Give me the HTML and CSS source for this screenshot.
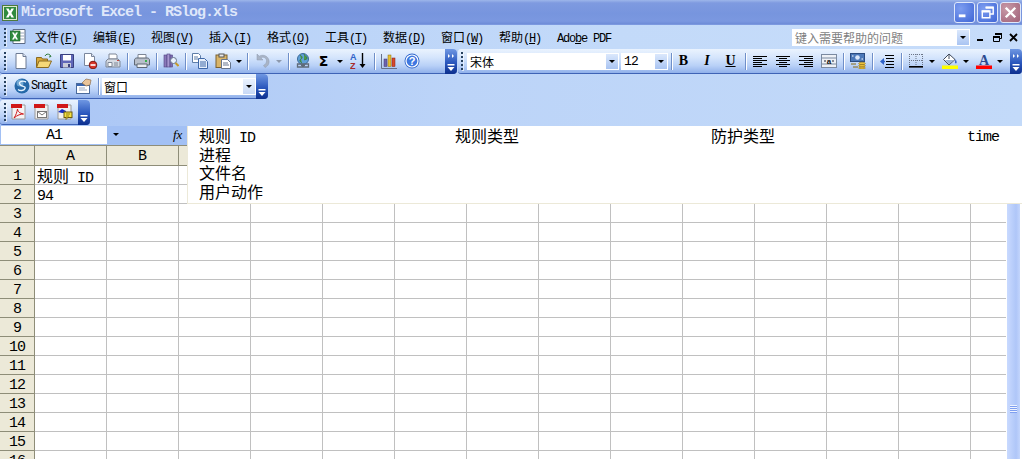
FILE: index.html
```html
<!DOCTYPE html>
<html lang="zh">
<head>
<meta charset="utf-8">
<title>Microsoft Excel - RSlog.xls</title>
<link rel="stylesheet" href="styles.css">
</head>
<body>
<header class="titlebar">
  <svg class="app-icon" viewBox="0 0 16 16"><rect x=".5" y=".5" width="15" height="15" fill="#dfe8d0" stroke="#4d7a3c"/><rect x="2" y="2" width="12" height="12" fill="#2f8a3e"/><path d="M4 3.500h2.600L8 6l1.400-2.500H12L9.400 8 12 12.500H9.400L8 10l-1.400 2.500H4L6.600 8z" fill="#fff"/></svg>
  <span class="title-text">Microsoft Excel - RSlog.xls</span>
  <div class="win-buttons">
    <div class="win-btn"><svg viewBox="0 0 20 20"><rect x="4" y="12" width="7" height="3" fill="#fff"/></svg></div>
    <div class="win-btn"><svg viewBox="0 0 20 20"><path d="M8 4.500h8v7h-3M4.500 8.500h8v7h-8z" fill="none" stroke="#fff" stroke-width="1.500"/><path d="M8 4h8v2H8zM4 8h8v2H4z" fill="#fff"/></svg></div>
    <div class="win-btn win-close"><svg viewBox="0 0 20 20"><path d="M5 5l10 10M15 5L5 15" stroke="#fff" stroke-width="2.600"/></svg></div>
  </div>
</header>

<nav class="menubar">
  <span class="grip"></span>
  <svg class="doc-icon" viewBox="0 0 16 16"><path d="M3 .5h12v14H3z" fill="#fff" stroke="#5b6a84"/><path d="M9 4h5M9 7h5M9 10h5" stroke="#9aa7bd"/><rect x="0" y="2" width="10" height="10" fill="#2f8a3e" stroke="#1f5e2a" stroke-width=".6"/><path d="M2 3.500h2l1 2 1-2h2l-2 3.500 2 3.500H6l-1-2-1 2H2l2-3.500z" fill="#fff"/></svg>
  <span class="menu-items">
    <span class="menu-item">文件<small>(<u>F</u>)</small></span>
    <span class="menu-item">编辑<small>(<u>E</u>)</small></span>
    <span class="menu-item">视图<small>(<u>V</u>)</small></span>
    <span class="menu-item">插入<small>(<u>I</u>)</small></span>
    <span class="menu-item">格式<small>(<u>O</u>)</small></span>
    <span class="menu-item">工具<small>(<u>T</u>)</small></span>
    <span class="menu-item">数据<small>(<u>D</u>)</small></span>
    <span class="menu-item">窗口<small>(<u>W</u>)</small></span>
    <span class="menu-item">帮助<small>(<u>H</u>)</small></span>
    <span class="menu-item"><small>Ado<u>b</u>e PDF</small></span>
  </span>
  <span class="help-box"><span class="help-text">键入需要帮助的问题</span><span class="dd-button"><i class="arrow"></i></span></span>
  <span class="doc-controls">
    <svg viewBox="0 0 11 11"><rect x="1" y="7" width="6" height="2" fill="#000"/></svg>
    <svg viewBox="0 0 11 11"><path d="M3.500 1.500h6v5h-2M1.500 4.500h6v5h-6z" fill="none" stroke="#000"/><path d="M3 1h7v2H3zM1 4h7v2H1z"/></svg>
    <svg viewBox="0 0 11 11"><path d="M2 2l7 7M9 2l-7 7" stroke="#000" stroke-width="1.800"/></svg>
  </span>
</nav>

<div class="dock">
  <div class="dock-row row-main">
    <div class="toolbar tb-standard">
      <span class="grip"></span>
      <span class="btn"><svg viewBox="0 0 16 16"><path d="M3 .5h7l3 3v12H3z" fill="#fff" stroke="#6d7b94"/><path d="M10 .5v3h3" fill="#dfe6f2" stroke="#6d7b94"/></svg></span>
      <span class="btn"><svg viewBox="0 0 16 16"><path d="M.5 4.500h5l1 1.500h5v8H.5z" fill="#d9a93a" stroke="#8a6a20"/><path d="M3 8h12.500l-3 6.500H.5z" fill="#f6d878" stroke="#8a6a20"/><path d="M9 3c1-2 3-2.500 5-1l1 1.500-2 .5" fill="none" stroke="#2f7a3a"/></svg></span>
      <span class="btn"><svg viewBox="0 0 16 16"><path d="M1.500 1.500h13v13h-13z" fill="#5f66b8" stroke="#39407f"/><rect x="4" y="2" width="8" height="5.500" fill="#fff"/><rect x="4" y="10" width="8" height="4.500" fill="#c8cbd8"/><rect x="9" y="11" width="2" height="3" fill="#39407f"/></svg></span>
      <span class="btn"><svg viewBox="0 0 16 16"><path d="M2.500.5h7l3 3v9h-10z" fill="#fff" stroke="#7a869c"/><path d="M9.500.5v3h3" fill="#dfe6f2" stroke="#7a869c"/><circle cx="11" cy="12" r="3.800" fill="#d8342a" stroke="#7e1a14"/><rect x="8.500" y="11.200" width="5" height="1.600" fill="#fff"/></svg></span>
      <span class="btn"><svg viewBox="0 0 16 16"><path d="M4 1h7l1 1.500V6H4z" fill="#fff" stroke="#7e8796"/><path d="M1 8l2-2h10l2 2v6H1z" fill="#d6dbe3" stroke="#7e8796"/><path d="M3 9.500h4v4H3z" fill="#fff" stroke="#7e8796"/><path d="M9 10h4M9 12h4" stroke="#7e8796"/><rect x="12" y="7" width="2" height="1" fill="#c9443a"/></svg></span>
      <i class="sep"></i>
      <span class="btn"><svg viewBox="0 0 16 16"><path d="M4 1.500h8V6H4z" fill="#fff" stroke="#7e8796"/><path d="M.5 7c0-1 1-2 2-2h11c1 0 2 1 2 2v5h-15z" fill="#b8bfca" stroke="#5f6875"/><path d="M3 11h10v3.500H3z" fill="#eceff3" stroke="#5f6875"/><rect x="11" y="7" width="2" height="2" fill="#38b04a"/></svg></span>
      <i class="sep"></i>
      <span class="btn"><svg viewBox="0 0 16 16"><rect x="1" y="2" width="3" height="12" fill="#8a78b8" stroke="#4e4280" stroke-width=".6"/><rect x="4" y="1" width="3" height="13" fill="#a898d0" stroke="#4e4280" stroke-width=".6"/><rect x="7" y="2" width="2.500" height="12" fill="#7d6bb0" stroke="#4e4280" stroke-width=".6"/><circle cx="10.500" cy="7.500" r="3" fill="#eaf3ff" stroke="#68758c"/><path d="M12.500 10l3 3" stroke="#c79a2a" stroke-width="2"/></svg></span>
      <i class="sep"></i>
      <span class="btn"><svg viewBox="0 0 16 16"><path d="M.5.5h6l2 2v7h-8z" fill="#fff" stroke="#5f7ea8"/><path d="M2 4h4M2 6h4" stroke="#5f7ea8"/><path d="M6.500 5.500h6l3 3v7h-9z" fill="#e7f0fc" stroke="#3f68a8"/><path d="M8 9h6M8 11h6M8 13h6" stroke="#3f68a8"/></svg></span>
      <span class="btn"><svg viewBox="0 0 16 16"><rect x="1" y="2" width="11" height="12.500" fill="#d9b468" stroke="#7a6030"/><rect x="4" y="1" width="5" height="3" fill="#e8e8e8" stroke="#555"/><path d="M6.500 6.500h6l3 3v6h-9z" fill="#fff" stroke="#66758c"/><path d="M8 10h5M8 12h6" stroke="#66758c"/></svg></span>
      <span class="dd"><i class="arrow"></i></span>
      <i class="sep"></i>
      <span class="btn"><svg viewBox="0 0 16 16"><path d="M3 1v6h6L6.800 4.800C9 3.500 12 4.500 12.500 7.500c.3 2-1 4-3 5l1.500 2c3.500-1.500 5-5 3.500-8.500C13 2.500 8.500 1.200 5.200 3.200z" fill="#a9b4c6" stroke="#8d99ad" stroke-width=".5"/></svg></span>
      <span class="dd dd-wide"><i class="arrow arrow-off"></i></span>
      <i class="sep"></i>
      <span class="btn"><svg viewBox="0 0 16 16"><circle cx="8" cy="6" r="5.500" fill="#5fa0d8" stroke="#3a6a9a"/><path d="M5 2c2 1 3 3 1 4s-1 3 1 4M9 1c0 2 3 2 3 4s-2 1-3 2" fill="#4a9a4a" stroke="#3c8040"/><path d="M2.500 11h5v3h-5zM8.500 11h5v3h-5z" fill="none" stroke="#5f6b78" stroke-width="1.300"/><path d="M6 12.500h4" stroke="#5f6b78" stroke-width="1.300"/></svg></span>
      <span class="btn btn-narrow"><span class="sigma">Σ</span></span>
      <span class="dd dd-mid"><i class="arrow"></i></span>
      <span class="btn"><svg viewBox="0 0 16 16"><text x="0" y="7" class="sort-a">A</text><text x="0" y="15.500" class="sort-z">Z</text><path d="M12.500 0v13" stroke="#000" stroke-width="1.400"/><path d="M9.500 11h6l-3 4z"/></svg></span>
      <i class="sep sep-loose"></i>
      <span class="btn"><svg viewBox="0 0 16 16"><path d="M.5 1v14.500H16" fill="none" stroke="#66708a"/><path d="M1 13.500l3-2h11l-3 2z" fill="#c8ccd8"/><rect x="3" y="6" width="3" height="7.500" fill="#6e64b0" stroke="#3e3670" stroke-width=".5"/><rect x="7" y="2" width="3" height="11.500" fill="#e8c030" stroke="#8a6e10" stroke-width=".5"/><rect x="11" y="5" width="3" height="8.500" fill="#d8482e" stroke="#802010" stroke-width=".5"/></svg></span>
      <span class="btn"><svg viewBox="0 0 16 16"><circle cx="8" cy="8" r="7.500" fill="#2f66cc"/><circle cx="8" cy="8" r="6" fill="#3f78e0" stroke="#fff" stroke-width="1.200"/><text x="8" y="12" class="help-q">?</text></svg></span>
      <span class="chevron"><svg viewBox="0 0 12 25"><path d="M3 5l2 2-2 2zM7 5l2 2-2 2z" fill="#fff"/><rect x="2.500" y="15" width="7" height="1.500" fill="#fff"/><path d="M2.500 18h7L6 22z" fill="#fff"/></svg></span>
    </div>

    <div class="toolbar tb-format">
      <span class="grip"></span>
      <span class="combo combo-font"><span class="combo-text">宋体</span><span class="dd-button"><i class="arrow"></i></span></span>
      <span class="combo combo-size"><span class="combo-text mono">12</span><span class="dd-button"><i class="arrow"></i></span></span>
      <i class="sep sep-tight"></i>
      <span class="btn"><b class="fmt">B</b></span>
      <span class="btn btn-wide"><em class="fmt fmt-i">I</em></span>
      <span class="btn"><u class="fmt">U</u></span>
      <i class="sep"></i>
      <span class="btn"><svg viewBox="0 0 16 16"><path d="M1 3.500h14M1 5.500h9M1 7.500h14M1 9.500h9M1 11.500h14M1 13.500h9" stroke="#000"/></svg></span>
      <span class="btn"><svg viewBox="0 0 16 16"><path d="M1 3.500h14M4 5.500h8M1 7.500h14M4 9.500h8M1 11.500h14M4 13.500h8" stroke="#000"/></svg></span>
      <span class="btn"><svg viewBox="0 0 16 16"><path d="M1 3.500h14M6 5.500h9M1 7.500h14M6 9.500h9M1 11.500h14M6 13.500h9" stroke="#000"/></svg></span>
      <span class="btn"><svg viewBox="0 0 16 16"><rect x=".5" y="1.500" width="15" height="13" fill="#eef1f6" stroke="#7b8aa0"/><path d="M.5 5h15M.5 11h15" stroke="#7b8aa0"/><path d="M3 8h2M13 8h-2" stroke="#223"/><text x="8" y="10.500" class="merge-a">a</text></svg></span>
      <i class="sep"></i>
      <span class="btn"><svg viewBox="0 0 16 16"><rect x=".5" y=".5" width="14" height="8" fill="#4c78b8" stroke="#2c4c80"/><circle cx="7.500" cy="4.500" r="2.300" fill="#dce8fa"/><path d="M2 3h1.500M11.500 6H13" stroke="#fff"/><ellipse cx="12" cy="10.500" rx="3.300" ry="1.300" fill="#ecc23c" stroke="#8a6a10" stroke-width=".6"/><ellipse cx="12" cy="12.800" rx="3.300" ry="1.300" fill="#ecc23c" stroke="#8a6a10" stroke-width=".6"/><ellipse cx="12" cy="15" rx="3.300" ry="1" fill="#ecc23c" stroke="#8a6a10" stroke-width=".6"/><path d="M1 11h5M3 14h5" stroke="#8a6a10"/></svg></span>
      <i class="sep"></i>
      <span class="btn"><svg viewBox="0 0 16 16"><path d="M6 2.500h9M7 5.500h8M7 8.500h8M7 11.500h8M6 14.500h9" stroke="#000"/><path d="M1 8.500L5 5v7z" fill="#2f62c8"/><path d="M3 8.500h3" stroke="#2f62c8" stroke-width="1.500"/></svg></span>
      <i class="sep"></i>
      <span class="btn"><svg viewBox="0 0 16 16"><path d="M1.500 1v12M8 1v12M14.500 1v12M1 1.500h14M1 7.500h14" fill="none" stroke="#6a7486" stroke-dasharray="1 1"/><rect x="1" y="13" width="14" height="1.600" fill="#000"/></svg></span>
      <span class="dd dd-small"><i class="arrow"></i></span>
      <span class="btn btn-gap"><svg viewBox="0 0 16 16"><path d="M7 1L1.500 6.500 7 12l6-5.500z" fill="#fff" stroke="#404a5c"/><path d="M3 7h9l-5 4.500z" fill="#9cb4d8"/><path d="M7 1v5" stroke="#404a5c"/><path d="M13.500 6c1 2 1.500 3 1 4s-2 0-1.500-1.500z" fill="#3560c0"/><rect x="0" y="12.500" width="16" height="3.500" fill="#ffff00"/></svg></span>
      <span class="dd dd-small"><i class="arrow"></i></span>
      <span class="btn btn-gap"><svg viewBox="0 0 16 16"><text x="8" y="11.500" class="color-a">A</text><rect x="0" y="12.500" width="16" height="3.500" fill="#ff0000"/></svg></span>
      <span class="dd dd-small"><i class="arrow"></i></span>
      <span class="chevron"><svg viewBox="0 0 12 25"><path d="M3 5l2 2-2 2zM7 5l2 2-2 2z" fill="#fff"/><rect x="2.500" y="15" width="7" height="1.500" fill="#fff"/><path d="M2.500 18h7L6 22z" fill="#fff"/></svg></span>
    </div>
  </div>

  <div class="dock-row">
    <div class="toolbar tb-snagit">
      <span class="grip"></span>
      <svg class="snag-logo" viewBox="0 0 16 16"><circle cx="8" cy="8" r="7.500" fill="#2468a8"/><circle cx="6" cy="5" r="3.500" fill="#9fd0f0" opacity=".6"/><path d="M12 4C8 2 4 4 6 6.500s6 1.500 5 4-5 2.500-7 1" fill="none" stroke="#e8f4ff" stroke-width="1.400"/></svg>
      <span class="snag-label">SnagIt</span>
      <span class="btn btn-snag"><svg viewBox="0 0 16 16"><rect x=".5" y="5.500" width="13" height="10" fill="#fff" stroke="#4a6a9c"/><rect x="1" y="6" width="12" height="2" fill="#3a66b0"/><path d="M3 10h6M3 12h8" stroke="#9aa8c0"/><path d="M6 5l4-4 5 1-1 5-4 1z" fill="#e9c49a" stroke="#80603c" stroke-width=".6"/></svg></span>
      <i class="sep sep-snag"></i>
      <span class="combo combo-window"><span class="combo-text">窗口</span><span class="dd-button dd-flat"><i class="arrow"></i></span></span>
      <span class="chevron"><svg viewBox="0 0 12 25"><rect x="2.500" y="15" width="7" height="1.500" fill="#fff"/><path d="M2.500 18h7L6 22z" fill="#fff"/></svg></span>
    </div>
  </div>

  <div class="dock-row">
    <div class="toolbar tb-pdf">
      <span class="grip"></span>
      <svg class="pdf-icon" viewBox="0 0 16 16"><path d="M1 1h13v14H1z" fill="#f4f4f4" stroke="#9a9a9a"/><rect x="0" y="0" width="11" height="4" fill="#d01818"/><path d="M3 14c2-3 3-6 3.500-9 .5 3 2 4 6 5-3 0-6 1-9.500 4z" fill="none" stroke="#d01818"/></svg>
      <svg class="pdf-icon" viewBox="0 0 16 16"><path d="M1 1h13v14H1z" fill="#f0f0f0" stroke="#9a9a9a"/><rect x="0" y="0" width="11" height="4" fill="#d01818"/><rect x="3.500" y="7.500" width="9" height="6" fill="#fff" stroke="#777"/><path d="M3.500 7.500l4.500 3.500 4.500-3.500" fill="none" stroke="#777"/></svg>
      <svg class="pdf-icon" viewBox="0 0 16 16"><path d="M1 1h13v14H1z" fill="#f0f0f0" stroke="#9a9a9a"/><rect x="0" y="0" width="11" height="4" fill="#d01818"/><path d="M1 8l4-3 4 2v2H5z" fill="#1830c8"/><rect x="7" y="8" width="8" height="5.500" fill="#f4e040" stroke="#6a5a10"/><path d="M9 10h4M9 12h3" stroke="#6a5a10" stroke-width=".7"/><path d="M9 13.500v2l2-2" fill="#f4e040" stroke="#6a5a10" stroke-width=".7"/></svg>
      <span class="chevron"><svg viewBox="0 0 12 25"><rect x="2.500" y="15" width="7" height="1.500" fill="#fff"/><path d="M2.500 18h7L6 22z" fill="#fff"/></svg></span>
    </div>
  </div>
</div>

<main class="workspace">
  <div class="formula-row">
    <div class="name-box">A1</div>
    <span class="name-arrow"><i class="arrow"></i></span>
    <em class="fx">fx</em>
  </div>

  <div class="col-heads">
    <span class="corner"></span>
    <span class="col-head">A</span><span class="col-head">B</span><span class="col-rest"></span>
  </div>

  <div class="sheet-body">
    <div class="row-heads">
      <span class="row-head">1</span><span class="row-head">2</span><span class="row-head">3</span><span class="row-head">4</span><span class="row-head">5</span><span class="row-head">6</span><span class="row-head">7</span><span class="row-head">8</span><span class="row-head">9</span><span class="row-head">10</span><span class="row-head">11</span><span class="row-head">12</span><span class="row-head">13</span><span class="row-head">14</span><span class="row-head">15</span><span class="row-head">16</span>
    </div>
    <div class="cells">
      <div class="cell">规则<span class="mono"> ID</span></div>
      <div class="cell cell-num mono">94</div>
    </div>
    <div class="scrollbar">
      <div class="thumb"><span class="thumb-grip"></span></div>
    </div>
  </div>

  <div class="formula-edit">
    <div class="edit-line">
      <span class="edit-col">规则<span class="mono"> ID</span></span>
      <span class="edit-col">规则类型</span>
      <span class="edit-col">防护类型</span>
      <span class="edit-last mono">time</span>
    </div>
    <div class="edit-line">进程</div>
    <div class="edit-line">文件名</div>
    <div class="edit-line">用户动作</div>
  </div>
</main>
</body>
</html>
```

FILE: styles.css
```css
* { box-sizing: border-box; }
html, body { margin: 0; height: 459px; overflow: hidden; }
body {
  background: #fff;
  color: #000;
  font-family: "Noto Sans CJK SC", "Liberation Sans", sans-serif;
  font-size: 12px;
  width: 1022px;
}
svg { display: block; }
.mono {
  font-family: "Liberation Mono", "Noto Sans CJK SC", monospace;
  font-size: 15px;
  letter-spacing: -1px;
}

/* title bar */
.titlebar {
  height: 25px;
  display: flex;
  align-items: center;
  background: linear-gradient(#9db6ea 0, #7e9ae0 3px, #7795de 14px, #7b98e0 21px, #6e8cd8 24px, #8aa5e6 25px);
}
.app-icon { width: 16px; height: 16px; margin-left: 2px; }
.title-text {
  margin-left: 3px;
  font: bold 15px/25px "Liberation Mono", monospace;
  letter-spacing: -1px;
  color: #dfe7fa;
  white-space: pre;
}
.win-buttons { margin-left: auto; display: flex; gap: 2px; margin-right: 1px; }
.win-btn {
  width: 21px;
  height: 21px;
  border: 1px solid #dfe8fb;
  border-radius: 3px;
  background: radial-gradient(circle at 30% 30%, #7d9df0, #3f66d6);
}
.win-btn svg { width: 19px; height: 19px; }
.win-close { background: radial-gradient(circle at 30% 30%, #c89aa8, #a06078); }

/* menu bar */
.menubar {
  height: 24px;
  display: flex;
  align-items: center;
  background: linear-gradient(90deg, #b4cef7, #c3daf9 60%, #c6dcfa);
}
.grip {
  flex: none;
  width: 2px;
  height: 18px;
  margin: 0 3px 0 4px;
  background: repeating-linear-gradient(#27415e 0 2px, transparent 2px 4px);
  box-shadow: 1px 1px 0 rgba(255, 255, 255, .6);
}
.doc-icon { width: 16px; height: 16px; margin-left: 1px; }
.menu-items { display: flex; margin-left: 9px; }
.menu-item { width: 58px; white-space: pre; line-height: 18px; }
.menu-item small { font: 12px "Liberation Mono", monospace; letter-spacing: -1.2px; }
.help-box {
  margin-left: auto;
  width: 178px;
  height: 17px;
  display: flex;
  background: #fff;
  border: 1px solid #fff;
  color: #7f7f7f;
  line-height: 15px;
  padding-left: 2px;
}
.help-text { flex: 1; }
.doc-controls { display: flex; gap: 5px; margin: 0 3px 0 6px; }
.doc-controls svg { width: 11px; height: 11px; }
.arrow {
  display: block;
  width: 0;
  height: 0;
  border: 3px solid transparent;
  border-top: 3px solid #000;
  border-bottom: 0;
}
.arrow-off { border-top-color: #8d99ad; }
.dd-button {
  flex: none;
  width: 12px;
  margin: 0 0 0 auto;
  display: flex;
  align-items: center;
  justify-content: center;
  background: linear-gradient(#dbe8fc, #a9c4f2);
}
.dd-flat { background: linear-gradient(#eaf2fe, #c8d9f6); }

/* tool bars */
.dock {
  background: linear-gradient(90deg, #a9c5f5, #bcd4f8 45%, #c3daf9);
}
.dock-row { display: flex; height: 26px; align-items: flex-start; }
.row-main { height: 25px; }
.toolbar {
  height: 25px;
  display: flex;
  align-items: center;
  border-radius: 3px 4px 4px 3px;
  border-bottom: 1px solid #3e63b6;
  background: linear-gradient(#eaf3fe 0, #d5e5fc 35%, #b8d0f7 70%, #90b0ea 100%);
}
.tb-standard { width: 457px; }
.tb-format { width: 564px; margin-left: 1px; flex: none; }
.tb-format .grip { margin-left: 3px; margin-right: 3px; }
.tb-snagit { width: 268px; }
.tb-pdf { width: 90px; }
.btn {
  flex: none;
  width: 23px;
  height: 22px;
  display: flex;
  align-items: center;
  justify-content: center;
}
.btn svg { width: 16px; height: 16px; }
.btn-narrow { width: 19px; }
.btn-wide { width: 24px; }
.btn-gap { margin-left: 2px; }
.btn-snag { width: 18px; margin-left: 8px; }
.dd {
  flex: none;
  width: 10px;
  display: flex;
  justify-content: center;
}
.dd-small { width: 9px; }
.dd-mid { width: 13px; }
.dd-wide { width: 12px; }
.sep {
  flex: none;
  width: 1px;
  height: 17px;
  margin: 0 2px 0 3px;
  background: #6f8fc8;
  box-shadow: 1px 0 0 #fff;
}
.sep-tight { margin-right: 0; }
.sep-loose { margin-left: 5px; }
.sep-snag { margin-left: 5px; margin-right: 3px; }
.chevron {
  flex: none;
  margin-left: auto;
  width: 12px;
  height: 25px;
  align-self: flex-start;
  border-radius: 0 4px 4px 0;
  background: linear-gradient(#6f97e2, #2a57bd 55%, #0c2f8e);
}
.chevron svg { width: 12px; height: 25px; }
.sigma { font: bold 14px "DejaVu Sans", sans-serif; }
.sort-a { font: bold 9px "Liberation Sans", sans-serif; fill: #2f62c8; }
.sort-z { font: bold 9px "Liberation Sans", sans-serif; fill: #a82a2a; }
.help-q { font: bold 11px "Liberation Sans", sans-serif; fill: #fff; text-anchor: middle; }
.merge-a { font: bold 8px "Liberation Sans", sans-serif; fill: #111; text-anchor: middle; }
.color-a { font: bold 14px "Liberation Serif", serif; fill: #2c4a90; text-anchor: middle; }
.fmt { font: bold 14px "Liberation Serif", serif; }
.fmt-i { font-style: italic; }
.combo {
  flex: none;
  height: 17px;
  display: flex;
  background: #fff;
  border: 1px solid #fff;
  line-height: 15px;
  font-size: 12px;
}
.combo-text { padding-left: 2px; }
.combo-text.mono { font-size: 13px; letter-spacing: -.8px; }
.combo-window .combo-text { padding-left: 1px; }
.combo-font { width: 152px; margin-left: 1px; }
.combo-size { width: 47px; margin-left: 2px; }
.combo-window { width: 154px; }
.snag-logo { width: 16px; height: 16px; margin-left: 5px; }
.snag-label { font: 12px "Liberation Mono", monospace; letter-spacing: -1.2px; margin-left: 1px; width: 36px; }
.pdf-icon { width: 16px; height: 16px; margin-left: 7px; }
.tb-pdf .grip + .pdf-icon { margin-left: 2px; }

/* formula bar and sheet */
.workspace { position: relative; }
.formula-row {
  height: 20px;
  display: flex;
  align-items: flex-start;
  background: #a2c0f4;
  border-bottom: 1px solid #8e8d78;
}
.name-box {
  width: 106px;
  height: 18px;
  margin-left: 1px;
  background: #fff;
  text-align: center;
  font: 15px/20px "Liberation Mono", monospace;
  letter-spacing: -1px;
}
.name-arrow { margin: 7px 0 0 6px; }
.fx { margin: 1px 0 0 54px; font: italic 13px/16px "Liberation Serif", serif; }
.col-heads {
  display: flex;
  height: 20px;
  background: #ece9d8;
  border-bottom: 1px solid #8e8d78;
}
.corner { flex: none; width: 35px; border-right: 1px solid #8e8d78; }
.col-head {
  flex: none;
  width: 72px;
  text-align: center;
  border-right: 1px solid #8e8d78;
  font: 15px/22px "Liberation Mono", monospace;
}
.col-rest { flex: 1; }
.sheet-body { display: flex; height: 293px; overflow: hidden; }
.row-heads { flex: none; width: 35px; }
.row-head {
  display: block;
  height: 19px;
  background: #ece9d8;
  border-right: 1px solid #8e8d78;
  border-bottom: 1px solid #8e8d78;
  text-align: center;
  font: 15px/21px "Liberation Mono", monospace;
  letter-spacing: -1px;
}
.cells {
  flex: none;
  width: 971px;
  background-image:
    linear-gradient(90deg, transparent 71px, #c0c0c0 71px),
    linear-gradient(transparent 18px, #c0c0c0 18px);
  background-size: 72px 19px;
}
.cell {
  height: 19px;
  padding-left: 2px;
  font-size: 16px;
  line-height: 18px;
  white-space: pre;
}
.cell.cell-num { padding-top: 4px; line-height: 15px; font-size: 15px; }
.scrollbar { flex: none; width: 16px; padding: 0 2px 0 1px; }
.thumb {
  height: 293px;
  padding: 239px 3px 0;
  background: linear-gradient(90deg, #c9daff, #afc6f8 70%, #c3d5fc);
}
.thumb-grip {
  display: block;
  height: 8px;
  background: repeating-linear-gradient(#eef3ff 0 1px, #7f9ff0 1px 2px);
}
.formula-edit {
  position: absolute;
  left: 187px;
  top: 0;
  right: 0;
  height: 78px;
  padding-left: 11px;
  background: #fff;
  border-left: 1px solid #ece9d8;
  border-bottom: 1px solid #ece9d8;
  font-size: 16px;
  line-height: 18.67px;
}
.edit-line { display: flex; height: 18.67px; white-space: pre; }
.edit-col { flex: none; width: 256px; }
.edit-last { padding-top: 3px; }
```
